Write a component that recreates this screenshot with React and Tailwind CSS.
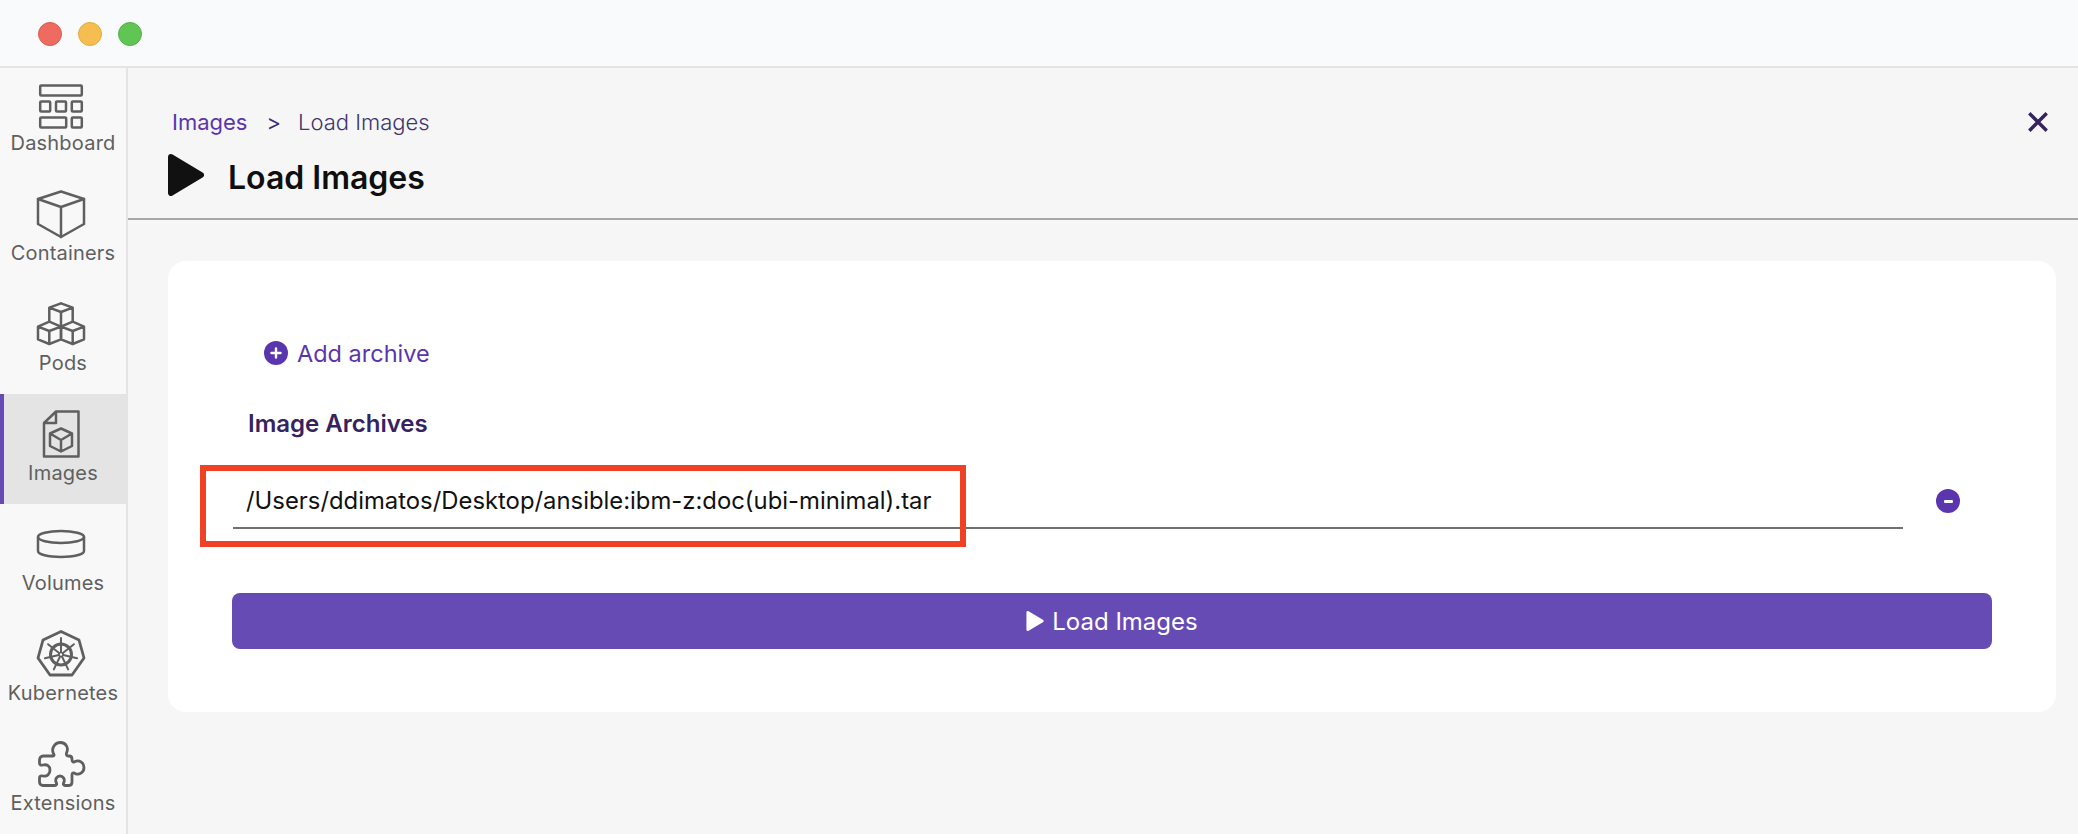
import React from "react";

const s = { fill: "none", stroke: "#5f5f5f", strokeWidth: 2.5, strokeLinejoin: "round", strokeLinecap: "round" };

function Ico({ children }) {
  return (
    <svg width="48" height="48" viewBox="0 0 48 48" className="mr-[4px] overflow-visible shrink-0" {...s}>
      {children}
    </svg>
  );
}

const icons = {
  Dashboard: (
    <Ico>
      <rect x="3.2" y="4.5" width="41.6" height="10" rx="1" />
      <rect x="3.2" y="20.5" width="10" height="10" rx="1" />
      <rect x="19" y="20.5" width="10" height="10" rx="1" />
      <rect x="34.8" y="20.5" width="10" height="10" rx="1" />
      <rect x="3.2" y="36.5" width="26" height="10" rx="1" />
      <rect x="34.8" y="36.5" width="10" height="10" rx="1" />
    </Ico>
  ),
  Containers: (
    <Ico>
      <path d="M24 0.5 L47 8 V33 L24 46 L1 33 V8 Z" />
      <path d="M1 8 L24 16 L47 8 M24 16 V46" />
    </Ico>
  ),
  Pods: (
    <Ico>
      <path d="M24 2.3 L35.7 6.7 V20.7 M12.3 20.7 V6.7 L24 2.3 M12.3 6.7 L24 11 L35.7 6.7 M24 11 V25.7" />
      <path d="M12.3 20.7 L1 25.7 V38.3 L12.3 43 L24 38.3 V25.7 Z M1 25.7 L12.3 30 L24 25.7 M12.3 30 V43" />
      <path d="M35.7 20.7 L47 25.7 V38.3 L35.7 43 L24 38.3 V25.7 Z M47 25.7 L35.7 30 L24 25.7 M35.7 30 V43" />
    </Ico>
  ),
  Images: (
    <Ico>
      <path d="M19 0.5 H41.5 V45.5 H7 V12 Z M19 0.5 V12 H7" />
      <path d="M24 17.5 L35 22.5 V35 L24 40.5 L13 35 V22.5 Z M13 22.5 L24 29 L35 22.5 M24 29 V40.5" />
    </Ico>
  ),
  Volumes: (
    <Ico>
      <ellipse cx="24" cy="16" rx="23" ry="6" />
      <path d="M1 16 V30 C1 33.5 11 36 24 36 C37 36 47 33.5 47 30 V16" />
    </Ico>
  ),
  Kubernetes: (
    <Ico>
      <path d="M24 0.5 L42 9 L47 27 L35 44 H13 L1 27 L6 9 Z" strokeWidth="2.8" />
      <circle cx="24" cy="23.5" r="10.5" strokeWidth="3" />
      {[0, 1, 2, 3, 4, 5, 6].map((i) => {
        const a = (i * 2 * Math.PI) / 7 - Math.PI / 2;
        return (
          <line
            key={i}
            x1="24"
            y1="23.5"
            x2={24 + 16.5 * Math.cos(a)}
            y2={23.5 + 16.5 * Math.sin(a)}
            strokeWidth="2"
          />
        );
      })}
      <circle cx="24" cy="23.5" r="2" fill="#f8f8f8" strokeWidth="1.6" />
    </Ico>
  ),
  Extensions: (
    <Ico>
      <path
        strokeWidth="2.8"
        d="M6 15 H16 C17 15 17.5 14 16.5 12.5 C14 8 17.5 1.5 23.5 1.5 C29 1.5 32 7 29.5 12 C29 14 30 15 31 15 H32 C34 15 35 16.5 35 18 V19 C35 21 37 21.5 38 20.5 C42 18.5 47 21.5 47 26.5 C47 31.5 42 34.5 38 32.5 C37 31.5 35 31.5 35 33.5 V41 C35 43 34 44.5 32 44.5 H28 C26 44.5 26 43 27 41 C28 38 26 35 23 35 C20 35 18 38 19 41 C20 43 20 44.5 18 44.5 H6 C4 44.5 2.5 43 2.5 41 V37 C2.5 35 4 34.5 6 35 C10 36 13 33 13 29 C13 25 10 23 6 24 C4 24.5 2.5 24 2.5 22 V19 C2.5 17 4 15 6 15 Z"
      />
    </Ico>
  ),
};

const navItems = ["Dashboard", "Containers", "Pods", "Images", "Volumes", "Kubernetes", "Extensions"];

function NavItem({ name }) {
  const active = name === "Images";
  return (
    <div
      className={
        "h-[110px] shrink-0 flex flex-col items-center pt-[17px] " +
        (active ? "bg-[#e4e4e4] border-l-[4px] border-[#674bb5] pr-[4px]" : "")
      }
    >
      {icons[name]}
      <span className="mt-[2px] text-[20px] leading-[24px] text-[#5f5f5f] tracking-[0.2px] whitespace-nowrap">{name}</span>
    </div>
  );
}

function Play({ size, color, className }) {
  return (
    <svg width={size} height={size} viewBox="0 0 36 42" className={className} style={{ height: size }}>
      <path d="M3 3 L33 21 L3 39 Z" fill={color} stroke={color} strokeWidth="6" strokeLinejoin="round" />
    </svg>
  );
}

export default function App() {
  return (
    <div className="w-[2078px] h-[834px] overflow-hidden flex flex-col bg-[#f6f6f6] font-['Inter',sans-serif]">
      <div className="relative z-10 h-[68px] shrink-0 bg-[#f9fafc] border-b-2 border-[#e4e4e4] flex items-center gap-[16px] pl-[38px] pt-[2px]">
        <div className="w-[24px] h-[24px] rounded-full bg-[#ef6a5f] border border-[#dc5b52]" />
        <div className="w-[24px] h-[24px] rounded-full bg-[#f6be50] border border-[#e3aa3f]" />
        <div className="w-[24px] h-[24px] rounded-full bg-[#61c554] border border-[#52b046]" />
      </div>
      <div className="flex-1 flex min-h-0">
        <nav className="w-[128px] shrink-0 bg-[#f8f8f8] border-r-2 border-[#e4e4e4] flex flex-col -mt-[4px]">
          {navItems.map((n) => (
            <NavItem key={n} name={n} />
          ))}
        </nav>
        <main className="flex-1 flex flex-col min-w-0">
          <header className="relative h-[152px] shrink-0 border-b-2 border-[#a8a8a8] pl-[44px] pt-[42px]">
            <div className="flex items-center text-[22px] leading-[24px]">
              <span className="text-[#5b35ad]">Images</span>
              <span className="ml-[19px] text-[#3c2a78]">&gt;</span>
              <span className="ml-[17px] text-[#41336f] font-light">Load Images</span>
            </div>
            <div className="flex items-center mt-[20px] -ml-[4px]">
              <Play size={42} color="#111111" className="w-[36px]" />
              <h1 className="ml-[24px] mt-[6px] text-[32px] leading-[36px] font-semibold text-[#0f0f0f]">Load Images</h1>
            </div>
            <svg width="20" height="20" viewBox="0 0 20 20" className="absolute top-[44px] right-[30px]">
              <path d="M2.5 2.5 L17.5 17.5 M17.5 2.5 L2.5 17.5" stroke="#35225f" strokeWidth="3.4" strokeLinecap="square" />
            </svg>
          </header>
          <div className="pt-[41px] pl-[40px] pr-[22px]">
            <section className="relative h-[451px] rounded-[18px] bg-white pt-[80px] px-[64px] flex flex-col">
              <div className="ml-[32px] flex items-center h-[24px]">
                <span className="w-[24px] h-[24px] rounded-full bg-[#5b35ad] flex items-center justify-center">
                  <svg width="12" height="12" viewBox="0 0 12 12">
                    <path d="M6 1.5 V10.5 M1.5 6 H10.5" stroke="#fff" strokeWidth="2.4" strokeLinecap="round" />
                  </svg>
                </span>
                <span className="ml-[9px] mt-[2px] text-[23.5px] leading-[24px] text-[#5b35ad]">Add archive</span>
              </div>
              <div className="ml-[16px] mt-[47px] h-[24px] text-[24px] leading-[24px] font-semibold text-[#35225f]">
                Image Archives
              </div>
              <div className="mt-[44px] flex items-start">
                <div className="ml-[1px] w-[1670px] h-[49px] border-b-2 border-[#707070] pl-[13px] pt-[8px] text-[23.85px] leading-[26px] text-[#111111]">
                  /Users/ddimatos/Desktop/ansible:ibm-z:doc(ubi-minimal).tar
                </div>
                <span className="ml-[33px] mt-[9px] w-[24px] h-[24px] rounded-full bg-[#5b35ad] flex items-center justify-center">
                  <span className="w-[9px] h-[3px] rounded-[1px] bg-white" />
                </span>
              </div>
              <button className="mt-[64px] h-[56px] w-full rounded-[8px] bg-[#674bb5] flex items-center justify-center text-white text-[24px]">
                <Play size={20} color="#ffffff" className="w-[18px] mr-[8px]" />
                <span className="mt-[2px]">Load Images</span>
              </button>
              <div className="absolute left-[32px] top-[204px] w-[766px] h-[82px] border-[6px] border-[#ef4123]" />
            </section>
          </div>
        </main>
      </div>
    </div>
  );
}
